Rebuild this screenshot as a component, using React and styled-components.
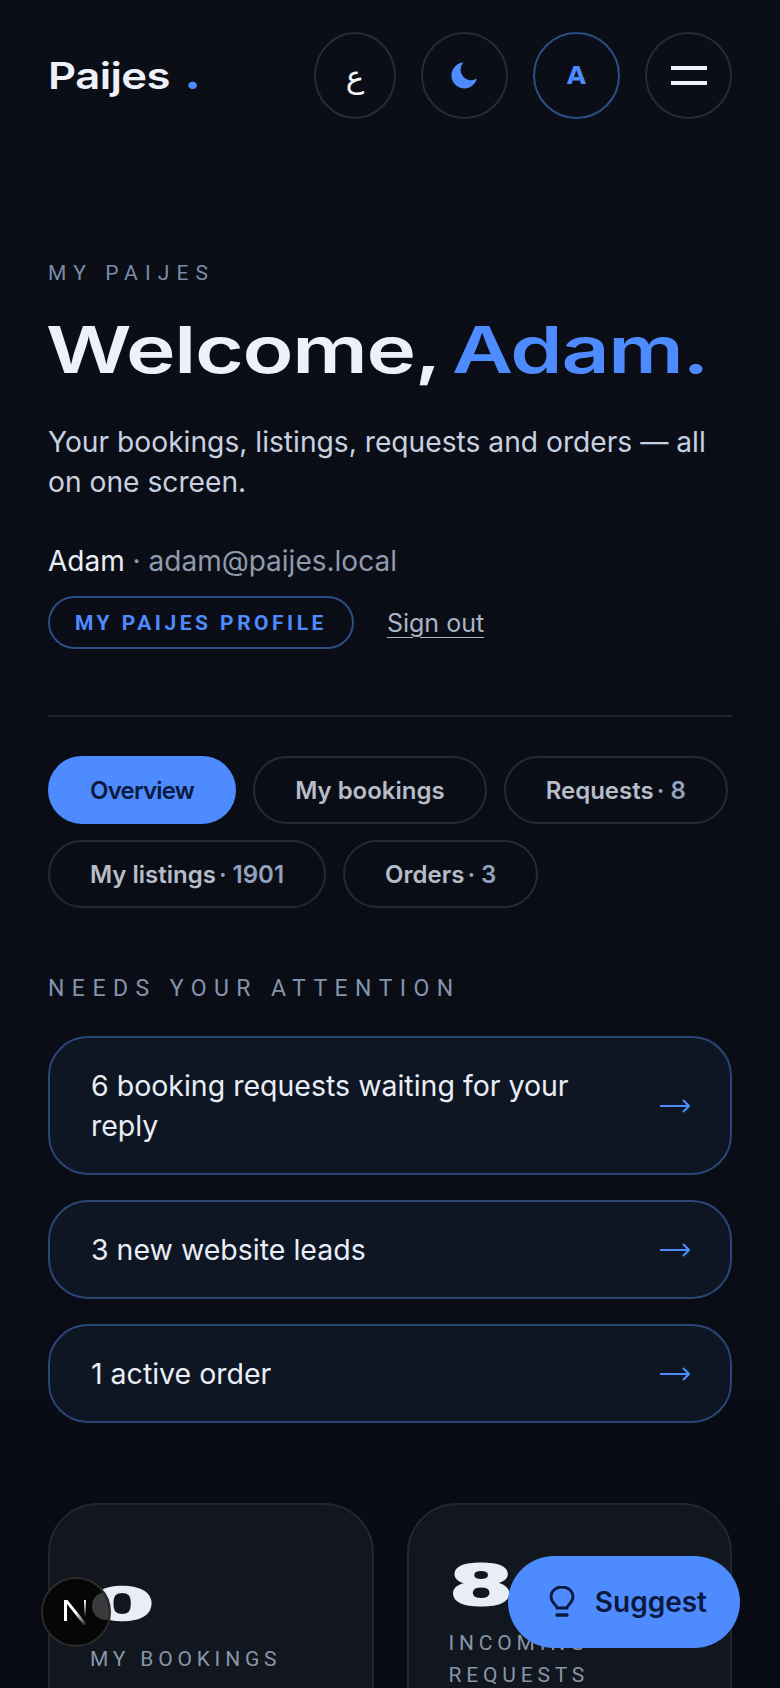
import React from 'react';
import styled, { createGlobalStyle } from 'styled-components';

const blue = '#4d8bff';
const ink = '#0a1a3f';
const sans = '"Inter", "Noto Sans", sans-serif';
const narrow = '"Roboto", "Liberation Sans", sans-serif';

const Global = createGlobalStyle`
  html, body {
    margin: 0;
    background: #0a0d16;
  }
  body {
    font-family: ${sans};
    color: #e9edf5;
  }
  * {
    box-sizing: border-box;
  }
`;

const Page = styled.div`
  height: 1688px;
  overflow: hidden;
  padding: 32px 48px 0;
  background: linear-gradient(180deg, #0b0e17 0%, #0a0d16 60%, #090b14 100%);
`;

const Header = styled.header`
  display: flex;
  align-items: center;
  justify-content: space-between;
  height: 87px;
`;

const Logo = styled.div`
  display: inline-block;
  font-size: 37px;
  font-weight: 600;
  line-height: 44px;
  letter-spacing: -0.5px;
  color: #eef1f7;
  transform: scaleX(1.18);
  transform-origin: left center;

  span {
    color: ${blue};
    margin-left: 12px;
    font-size: 46px;
    line-height: 0;
  }
`;

const HeaderActions = styled.div`
  display: flex;
  gap: 25px;
`;

const RoundButton = styled.button`
  display: flex;
  align-items: center;
  justify-content: center;
  width: ${p => (p.$slim ? '82px' : '87px')};
  height: 87px;
  padding: 0;
  border-radius: 50%;
  background: transparent;
  border: 2px solid ${p => (p.$active ? '#2d4d86' : '#272b34')};
  color: ${p => (p.$active ? blue : '#f2f4f8')};
  font-family: "DejaVu Sans", sans-serif;
  font-size: ${p => (p.$arabic ? '31px' : '25px')};
  font-weight: ${p => (p.$arabic ? 400 : 700)};
`;

const BurgerBars = styled.span`
  display: block;
  width: 36px;
  height: 19px;
  border-top: 4px solid #eef1f7;
  border-bottom: 4px solid #eef1f7;
`;

const Eyebrow = styled.div`
  margin-top: 142px;
  font-family: ${narrow};
  font-size: 21px;
  line-height: 24px;
  letter-spacing: 7.1px;
  color: #7a8ca6;
`;

const Title = styled.h1`
  display: inline-block;
  margin: 26px 0 0 -2px;
  font-size: 65px;
  line-height: 78px;
  font-weight: 600;
  letter-spacing: -1px;
  word-spacing: -5px;
  white-space: nowrap;
  color: #eef1f8;
  transform: scaleX(1.29);
  transform-origin: left center;

  span {
    color: ${blue};
  }
`;

const Lead = styled.p`
  margin: 33px 0 0;
  font-size: 28.2px;
  line-height: 40px;
  color: #c7d1e0;
`;

const UserLine = styled.div`
  margin-top: 39px;
  font-size: 28px;
  line-height: 40px;
  color: #eaeef5;

  span {
    color: #8f9bad;
  }
`;

const ProfileRow = styled.div`
  display: flex;
  align-items: center;
  gap: 33px;
  margin-top: 15px;
`;

const ProfileLink = styled.a`
  display: flex;
  align-items: center;
  height: 53px;
  padding: 0 25px;
  border: 2px solid #2d4d86;
  border-radius: 27px;
  font-family: ${narrow};
  font-size: 21px;
  font-weight: 700;
  letter-spacing: 3.5px;
  color: ${blue};
`;

const SignOut = styled.a`
  font-size: 25px;
  line-height: 28px;
  color: #aab4c5;
  text-decoration: underline;
  text-underline-offset: 5px;
  text-decoration-thickness: 1px;
`;

const Divider = styled.hr`
  height: 2px;
  margin: 66px 0 0;
  border: 0;
  background: #21252e;
`;

const Tabs = styled.nav`
  display: flex;
  flex-wrap: wrap;
  gap: 16px 17px;
  margin-top: 39px;
`;

const Tab = styled.a`
  display: flex;
  align-items: center;
  height: 68px;
  padding: 0 40px;
  border-radius: 34px;
  border: 2px solid ${p => (p.$active ? blue : '#262a33')};
  background: ${p => (p.$active ? blue : 'transparent')};
  color: ${p => (p.$active ? ink : '#b6bdc9')};
  font-size: 24px;
  font-weight: 600;
  letter-spacing: ${p => (p.$active ? '-0.8px' : '0')};
  white-space: nowrap;

  span {
    color: #93a3bd;
    margin-left: 3px;
  }
`;

const SectionLabel = styled.div`
  margin-top: 68px;
  font-family: ${narrow};
  font-size: 23px;
  line-height: 26px;
  letter-spacing: 7.45px;
  color: #8494ab;
`;

const Attention = styled.div`
  display: flex;
  flex-direction: column;
  gap: 25px;
  margin-top: 34px;
`;

const AttentionCard = styled.a`
  display: flex;
  align-items: center;
  justify-content: space-between;
  gap: 30px;
  padding: 27.5px 40px 27.5px 41px;
  border: 2px solid #2a4676;
  border-radius: 40px;
  background: #0e1624;
  font-size: 28.5px;
  line-height: 40px;
  color: #e9edf5;

  svg {
    flex: none;
  }
`;

const Stats = styled.div`
  display: grid;
  grid-template-columns: 1fr 1fr;
  gap: 33px;
  margin-top: 80px;
`;

const StatCard = styled.div`
  display: flex;
  flex-direction: column;
  justify-content: center;
  padding: 52px 40px 90px;
  border: 2px solid #222631;
  border-radius: 50px;
  background: #12161f;
`;

const StatValue = styled.div`
  font-family: "DejaVu Sans", sans-serif;
  font-size: 56px;
  line-height: 56px;
  font-weight: 700;
  color: #e9edf5;
  -webkit-text-stroke: 2px #e9edf5;
  transform-origin: left center;
  transform: translateY(${p => (p.$squat ? '4px' : '0')}) scale(1.65, ${p => (p.$squat ? 0.8 : 1)});
`;

const StatLabel = styled.div`
  margin-top: 14px;
  font-family: ${narrow};
  font-size: 21px;
  line-height: 32px;
  letter-spacing: 4.8px;
  color: #8795a9;
`;

const Fab = styled.button`
  position: fixed;
  right: 40px;
  bottom: 40px;
  display: flex;
  align-items: center;
  gap: 20px;
  height: 92px;
  padding: 0 33px 0 41px;
  border: 0;
  border-radius: 46px;
  background: ${blue};
  color: ${ink};
  font-family: ${sans};
  font-size: 28px;
  font-weight: 600;
`;

const DevBadge = styled.div`
  position: fixed;
  left: 41px;
  bottom: 41px;
  display: flex;
  align-items: center;
  justify-content: center;
  width: 70px;
  height: 70px;
  overflow: hidden;
  border-radius: 50%;
  border: 2px solid #2b2b2b;
  background: #060606;

  &::after {
    content: '';
    position: absolute;
    top: 13px;
    right: -11px;
    width: 28px;
    height: 28px;
    border-radius: 50%;
    background: #3a3b3d;
  }
`;

const ArrowIcon = () => (
  <svg width="30" height="18" viewBox="0 0 30 18" fill="none" stroke={blue} strokeWidth="2">
    <path d="M0 9h29M23 3l6 6-6 6" />
  </svg>
);

const MoonIcon = () => (
  <svg width="33" height="33" viewBox="0 0 24 24" fill={blue}>
    <path d="M21 14.2A9.4 9.4 0 1 1 11.3 2.6 7.6 7.6 0 0 0 21 14.2z" />
  </svg>
);

const BulbIcon = () => (
  <svg width="26" height="32" viewBox="0 0 26 32" fill="none" stroke={ink} strokeWidth="2.8" strokeLinecap="round">
    <path d="M8 22c0-3-6-5-6-11.500a11 9.500 0 0 1 22 0C24 17 18 19 18 22z" />
    <path d="M8 29h10" strokeWidth="3.400" />
  </svg>
);

const NextMark = () => (
  <svg width="30" height="30" viewBox="0 0 30 30">
    <defs>
      <linearGradient id="next-fade" x1="0" y1="0" x2="1" y2="1">
        <stop offset="0.5" stopColor="#fff" />
        <stop offset="1" stopColor="#fff" stopOpacity="0" />
      </linearGradient>
      <linearGradient id="next-bar" x1="0" y1="0" x2="0" y2="1">
        <stop offset="0" stopColor="#fff" />
        <stop offset="1" stopColor="#fff" stopOpacity="0" />
      </linearGradient>
    </defs>
    <path d="M3 3h3v21H3z" fill="#fff" />
    <path d="M3 3h3.500l20 25h-4z" fill="url(#next-fade)" />
    <path d="M23 3h2v17h-2z" fill="url(#next-bar)" />
  </svg>
);

const attention = ['6 booking requests waiting for your reply', '3 new website leads', '1 active order'];

const App = () => (
  <Page>
    <Global />
    <Header>
      <Logo>Paijes<span>.</span></Logo>
      <HeaderActions>
        <RoundButton $slim $arabic>ع</RoundButton>
        <RoundButton><MoonIcon /></RoundButton>
        <RoundButton $active>A</RoundButton>
        <RoundButton><BurgerBars /></RoundButton>
      </HeaderActions>
    </Header>

    <Eyebrow>MY PAIJES</Eyebrow>
    <Title>Welcome, <span>Adam.</span></Title>
    <Lead>Your bookings, listings, requests and orders — all on one screen.</Lead>
    <UserLine>Adam <span>· adam@paijes.local</span></UserLine>
    <ProfileRow>
      <ProfileLink>MY PAIJES PROFILE</ProfileLink>
      <SignOut>Sign out</SignOut>
    </ProfileRow>
    <Divider />

    <Tabs>
      <Tab $active>Overview</Tab>
      <Tab>My bookings</Tab>
      <Tab>Requests<span>· 8</span></Tab>
      <Tab>My listings<span>· 1901</span></Tab>
      <Tab>Orders<span>· 3</span></Tab>
    </Tabs>

    <SectionLabel>NEEDS YOUR ATTENTION</SectionLabel>
    <Attention>
      {attention.map(item => (
        <AttentionCard key={item}>
          {item}
          <ArrowIcon />
        </AttentionCard>
      ))}
    </Attention>

    <Stats>
      <StatCard>
        <StatValue $squat>0</StatValue>
        <StatLabel>MY BOOKINGS</StatLabel>
      </StatCard>
      <StatCard>
        <StatValue>8</StatValue>
        <StatLabel>INCOMING REQUESTS</StatLabel>
      </StatCard>
    </Stats>

    <DevBadge><NextMark /></DevBadge>
    <Fab><BulbIcon />Suggest</Fab>
  </Page>
);

export default App;
